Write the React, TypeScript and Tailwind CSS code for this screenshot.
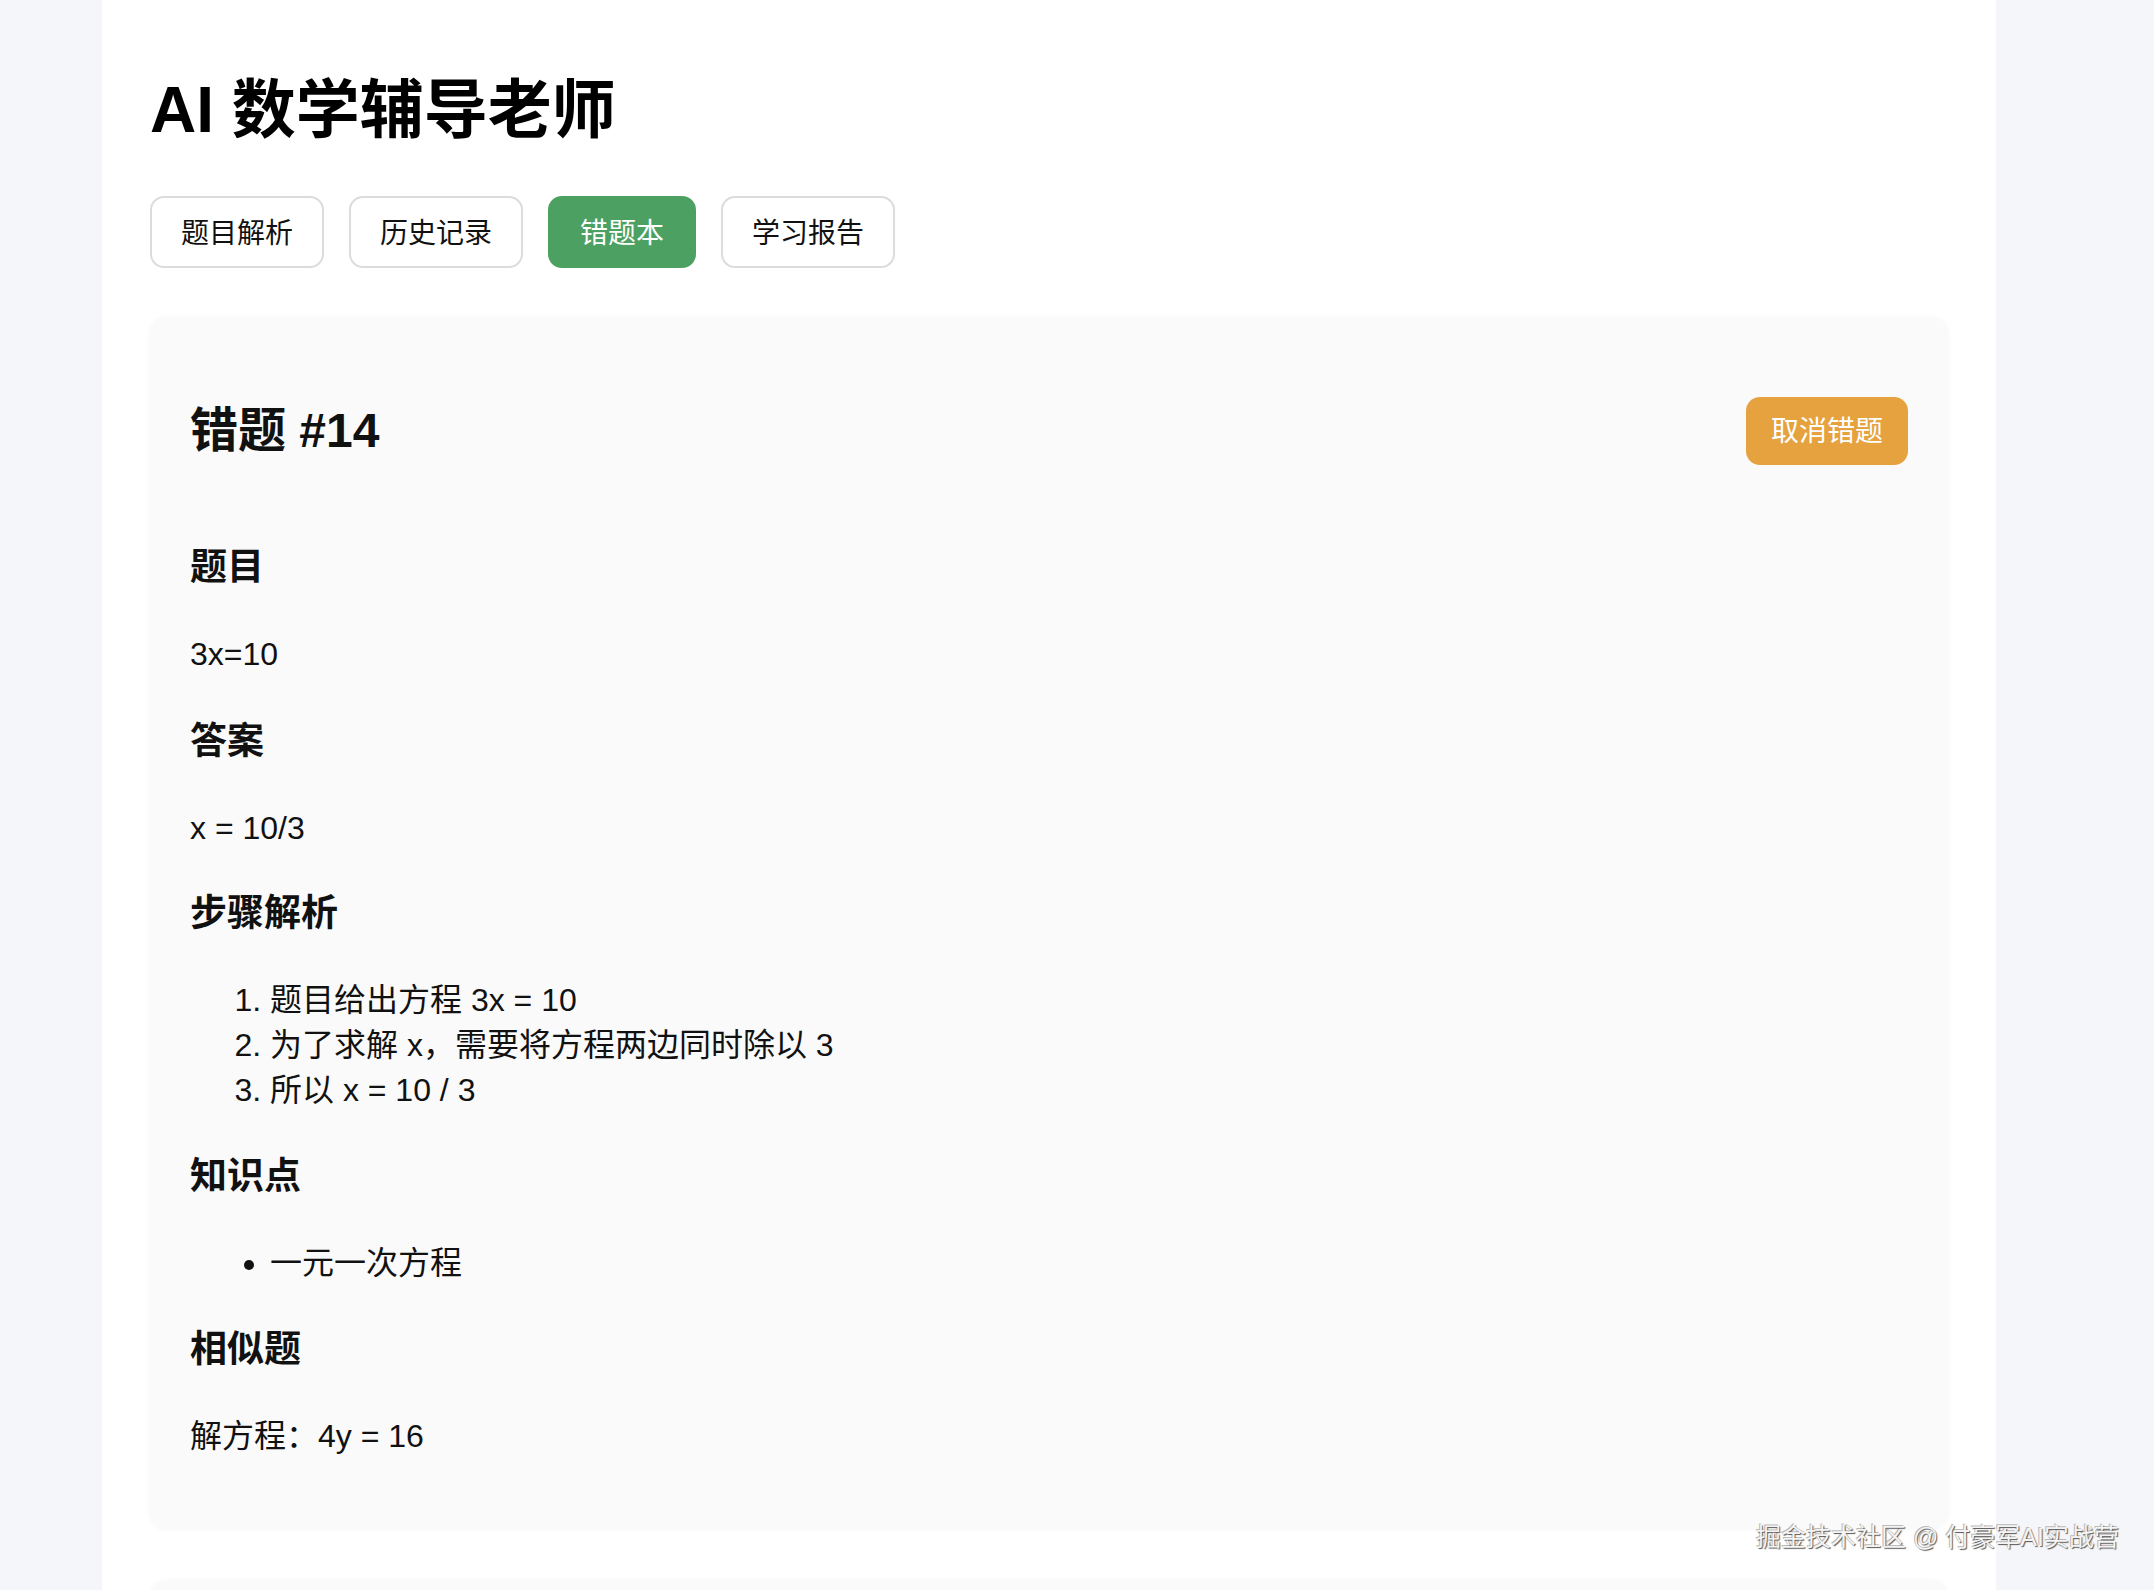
import React from "react";

const font = { fontFamily: '"Liberation Sans", "Noto Sans CJK SC", sans-serif' };

function Tab({ label, active }: { label: string; active?: boolean }) {
  return (
    <button
      className={
        active
          ? "h-[72px] px-[30px] pt-[3px] rounded-[14px] border-2 border-[#4ca062] bg-[#4ca062] text-white text-[28px] leading-[40px]"
          : "h-[72px] px-[29px] pt-[3px] rounded-[14px] border-2 border-[#dcdcdc] bg-white text-[#111] text-[28px] leading-[40px]"
      }
    >
      {label}
    </button>
  );
}

function H3({ children }: { children: React.ReactNode }) {
  return <h3 className="text-[37px] leading-[44px] font-bold text-[#111]">{children}</h3>;
}

function P({ children }: { children: React.ReactNode }) {
  return <p className="text-[32px] leading-[44px] text-[#111]">{children}</p>;
}

export default function App() {
  return (
    <div className="min-h-[1590px] bg-[#f5f6fa] relative overflow-hidden" style={font}>
      <div className="ml-[102px] w-[1894px] bg-white min-h-[1590px] px-[48px] pt-[73px]">
        <h1 className="text-[64px] leading-[74px] font-bold text-black">AI 数学辅导老师</h1>
        <div className="flex gap-[25px] mt-[49px]">
          <Tab label="题目解析" />
          <Tab label="历史记录" />
          <Tab label="错题本" active />
          <Tab label="学习报告" />
        </div>

        <div className="mt-[49px] w-[1798px] rounded-[16px] bg-[#fafafa] shadow-[0_1px_6px_rgba(0,0,0,0.04)] px-[40px] pt-[41px] pb-[70px]">
          <div className="flex items-center justify-between h-[146px]">
            <h2 className="text-[48px] leading-[56px] font-bold text-[#111]">错题 #14</h2>
            <button className="h-[68px] px-[25px] pt-[2px] rounded-[14px] bg-[#e5a23f] text-white text-[28px] leading-[40px]">
              取消错题
            </button>
          </div>
          <div className="flex flex-col gap-[42px] mt-[42px]">
            <H3>题目</H3>
            <P>3x=10</P>
            <div className="mt-[2px]">
              <H3>答案</H3>
            </div>
            <P>x = 10/3</P>
            <H3>步骤解析</H3>
            <ol className="list-decimal pl-[80px] text-[32px] leading-[45px] text-[#111]">
              <li>题目给出方程 3x = 10</li>
              <li>为了求解 x，需要将方程两边同时除以 3</li>
              <li>所以 x = 10 / 3</li>
            </ol>
            <H3>知识点</H3>
            <ul className="list-disc pl-[80px] text-[32px] leading-[45px] text-[#111]">
              <li>一元一次方程</li>
            </ul>
            <H3>相似题</H3>
            <P>解方程：4y = 16</P>
          </div>
        </div>

        <div className="mt-[52px] w-[1798px] h-[300px] rounded-[16px] bg-[#fafafa] shadow-[0_1px_6px_rgba(0,0,0,0.04)]" />
      </div>

      <div className="absolute left-[1756px] top-[1520px] text-[25px] leading-[34px] text-[#f4f4f4] [text-shadow:1px_1px_1px_#555,-1px_-1px_0_#bbb] whitespace-nowrap">
        掘金技术社区 @ 付豪军AI实战营
      </div>
    </div>
  );
}
